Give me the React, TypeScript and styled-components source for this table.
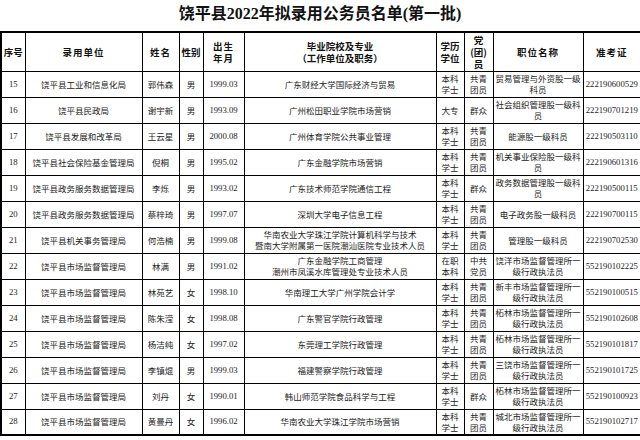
import styled, { createGlobalStyle } from 'styled-components'

/* ---------------- data ---------------- */

type Row = {
  no: number
  unit: string
  name: string
  sex: string
  born: string
  school: string[]
  edu: string[]
  party: string[]
  post: string
  ticket: string
}

const ROWS: Row[] = [
  { no: 15, unit: '饶平县工业和信息化局', name: '郭伟森', sex: '男', born: '1999.03', school: ['广东财经大学国际经济与贸易'], edu: ['本科', '学士'], party: ['共青', '团员'], post: '贸易管理与外资股一级科员', ticket: '222190600529' },
  { no: 16, unit: '饶平县民政局', name: '谢宇新', sex: '男', born: '1993.09', school: ['广州松田职业学院市场营销'], edu: ['大专'], party: ['群众'], post: '社会组织管理股一级科员', ticket: '222190701219' },
  { no: 17, unit: '饶平县发展和改革局', name: '王云星', sex: '男', born: '2000.08', school: ['广州体育学院公共事业管理'], edu: ['本科', '学士'], party: ['共青', '团员'], post: '能源股一级科员', ticket: '222190503110' },
  { no: 18, unit: '饶平县社会保险基金管理局', name: '倪桐', sex: '男', born: '1995.02', school: ['广东金融学院市场营销'], edu: ['本科', '学士'], party: ['共青', '团员'], post: '机关事业保险股一级科员', ticket: '222190601316' },
  { no: 19, unit: '饶平县政务服务数据管理局', name: '李烁', sex: '男', born: '1993.02', school: ['广东技术师范学院通信工程'], edu: ['本科', '学士'], party: ['群众'], post: '政务数据管理股一级科员', ticket: '222190500115' },
  { no: 20, unit: '饶平县政务服务数据管理局', name: '蔡梓琦', sex: '男', born: '1997.07', school: ['深圳大学电子信息工程'], edu: ['本科', '学士'], party: ['共青', '团员'], post: '电子政务股一级科员', ticket: '222190700115' },
  { no: 21, unit: '饶平县机关事务管理局', name: '何浩楠', sex: '男', born: '1999.08', school: ['华南农业大学珠江学院计算机科学与技术', '暨南大学附属第一医院潮汕医院专业技术人员'], edu: ['本科', '学士'], party: ['共青', '团员'], post: '管理股一级科员', ticket: '222190702530' },
  { no: 22, unit: '饶平县市场监督管理局', name: '林满', sex: '男', born: '1991.02', school: ['广东金融学院工商管理', '潮州市凤溪水库管理处专业技术人员'], edu: ['在职', '本科'], party: ['中共', '党员'], post: '饶洋市场监督管理所一级行政执法员', ticket: '552190102225' },
  { no: 23, unit: '饶平县市场监督管理局', name: '林苑艺', sex: '女', born: '1998.10', school: ['华南理工大学广州学院会计学'], edu: ['本科', '学士'], party: ['共青', '团员'], post: '新丰市场监督管理所一级行政执法员', ticket: '552190100515' },
  { no: 24, unit: '饶平县市场监督管理局', name: '陈朱滢', sex: '女', born: '1998.08', school: ['广东警官学院行政管理'], edu: ['本科', '学士'], party: ['共青', '团员'], post: '柘林市场监督管理所一级行政执法员', ticket: '552190102608' },
  { no: 25, unit: '饶平县市场监督管理局', name: '杨洁纯', sex: '女', born: '1997.02', school: ['东莞理工学院行政管理'], edu: ['本科', '学士'], party: ['共青', '团员'], post: '柘林市场监督管理所一级行政执法员', ticket: '552190101817' },
  { no: 26, unit: '饶平县市场监督管理局', name: '李镇焜', sex: '男', born: '1999.03', school: ['福建警察学院行政管理'], edu: ['本科', '学士'], party: ['共青', '团员'], post: '三饶市场监督管理所一级行政执法员', ticket: '552190101725' },
  { no: 27, unit: '饶平县市场监督管理局', name: '刘丹', sex: '女', born: '1990.01', school: ['韩山师范学院食品科学与工程'], edu: ['本科', '学士'], party: ['群众'], post: '柘林市场监督管理所一级行政执法员', ticket: '552190100923' },
  { no: 28, unit: '饶平县市场监督管理局', name: '黄曼丹', sex: '女', born: '1996.02', school: ['华南农业大学珠江学院市场营销'], edu: ['本科', '学士'], party: ['共青', '团员'], post: '城北市场监督管理所一级行政执法员', ticket: '552190102717' },
]

// column widths in px, left to right
const COLS = [24, 117, 37, 24, 41, 192, 28, 29, 90, 58]

/* ---------------- UI ---------------- */

const Global = createGlobalStyle`
  html, body { margin: 0; padding: 0; background: #fff; }
  body { font-family: "Liberation Serif", "Noto Sans CJK SC", serif; color: #1a1a1a; }
`

const Page = styled.div`
  width: 640px; height: 440px; overflow: hidden;
`

const Title = styled.h1`
  margin: 0; padding-top: 4px; height: 27px;
  text-align: center;
  font-family: "Liberation Serif", "Noto Sans CJK SC", serif;
  font-size: 16px; font-weight: 700; line-height: 20px;
  color: #111;
`

const Sheet = styled.table`
  width: 640px; table-layout: fixed;
  border-collapse: collapse;
  border: 2px solid #000;
`

const HeadRow = styled.tr`
  height: 39px;
`

const BodyRow = styled.tr`
  height: 26px;
`

const HeadCell = styled.th<{ $tight?: boolean }>`
  padding: 0;
  border: 1.5px solid #000;
  font-family: "Noto Sans CJK SC", sans-serif;
  font-size: 9.5px; font-weight: 700; line-height: 12px;
  letter-spacing: ${({ $tight }) => $tight ? '0' : '1px'};
  text-align: center; vertical-align: middle;
  color: #111;
`

const Cell = styled.td<{ $num?: boolean; $wrap?: boolean }>`
  padding: 0 1px;
  border: 1.5px solid #000;
  font-family: ${({ $num }) => $num ? '"Liberation Serif", serif' : '"Noto Sans CJK SC", sans-serif'};
  font-size: ${({ $num }) => $num ? '8.7px' : '8.5px'};
  line-height: 11px;
  text-align: center; vertical-align: middle;
  white-space: ${({ $wrap }) => $wrap ? 'normal' : 'nowrap'};
  word-break: break-all;
  overflow: hidden;
  color: #222;
`

const Lines = ({ items }: { items: string[] }) => (
  <>
    {items.map((t, i) => (
      <span key={i}>{i > 0 && <br />}{t}</span>
    ))}
  </>
)

/* ----------- page component ---------- */

export default function App() {
  return (
    <Page>
      <Global />
      <Title>饶平县2022年拟录用公务员名单(第一批)</Title>
      <Sheet>
        <colgroup>
          {COLS.map((w, i) => <col key={i} style={{ width: w }} />)}
        </colgroup>
        <thead>
          <HeadRow>
            <HeadCell $tight>序号</HeadCell>
            <HeadCell>录用单位</HeadCell>
            <HeadCell>姓名</HeadCell>
            <HeadCell $tight>性别</HeadCell>
            <HeadCell>出生<br />年月</HeadCell>
            <HeadCell $tight>毕业院校及专业<br />（工作单位及职务）</HeadCell>
            <HeadCell $tight>学历<br />学位</HeadCell>
            <HeadCell $tight>党<br />(团)<br />员</HeadCell>
            <HeadCell>职位名称</HeadCell>
            <HeadCell>准考证</HeadCell>
          </HeadRow>
        </thead>
        <tbody>
          {ROWS.map(r => (
            <BodyRow key={r.no}>
              <Cell $num>{r.no}</Cell>
              <Cell>{r.unit}</Cell>
              <Cell>{r.name}</Cell>
              <Cell>{r.sex}</Cell>
              <Cell $num>{r.born}</Cell>
              <Cell><Lines items={r.school} /></Cell>
              <Cell><Lines items={r.edu} /></Cell>
              <Cell><Lines items={r.party} /></Cell>
              <Cell $wrap>{r.post}</Cell>
              <Cell $num>{r.ticket}</Cell>
            </BodyRow>
          ))}
        </tbody>
      </Sheet>
    </Page>
  )
}
